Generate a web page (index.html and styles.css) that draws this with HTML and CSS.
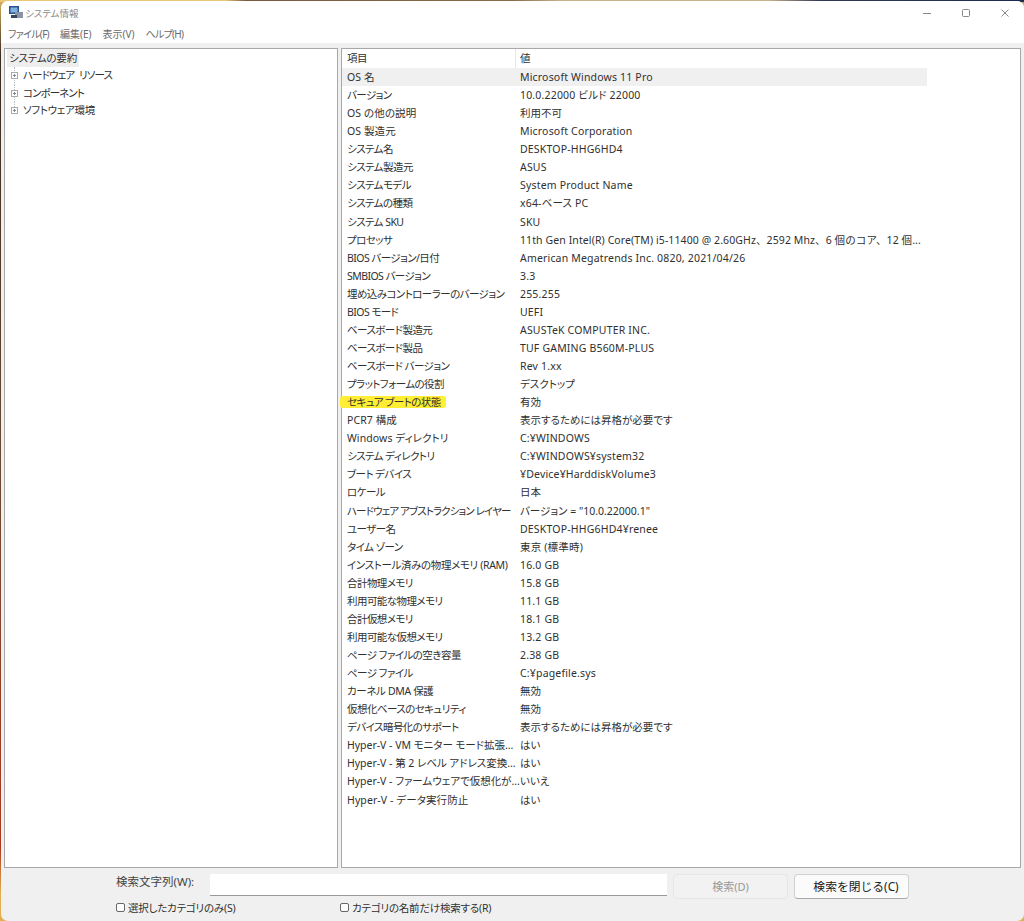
FILE: index.html
```html
<!DOCTYPE html>
<html lang="ja">
<head>
<meta charset="utf-8">
<title>システム情報</title>
<link rel="stylesheet" href="styles.css">
</head>
<body>
<div class="window">
  <header class="titlebar">
    <svg class="appicon" width="14" height="14" viewBox="0 0 14 14"><rect x="0" y="0" width="10" height="8" fill="#2b4f8f"/><rect x="1.5" y="1.5" width="7" height="5" fill="#7fb0e0"/><rect x="6" y="6" width="8" height="6" fill="#8a94a6"/><rect x="2" y="9" width="6" height="3" fill="#3a4660"/></svg>
    <span class="title">システム情報</span>
    <div class="controls">
      <svg width="8" height="12" viewBox="0 0 8 12"><path d="M0 5.5h8" stroke="#888" fill="none"/></svg>
      <svg width="8" height="12" viewBox="0 0 8 12"><rect x=".5" y="1.5" width="7" height="7" rx="1" stroke="#888" fill="none"/></svg>
      <svg width="8" height="12" viewBox="0 0 8 12"><path d="M.5 1.5l7 7M7.5 1.5l-7 7" stroke="#888" fill="none"/></svg>
    </div>
  </header>
  <nav class="menubar">
    <span class="kana">ファイル(F)</span><span>編集(E)</span><span>表示(V)</span><span class="kana">ヘルプ(H)</span>
  </nav>
  <main class="panes">
    <section class="tree">
      <div class="tree-root"><span>システムの要約</span></div>
      <div class="tree-item"><i class="plus"></i><span class="wide-space">ハードウェア リソース</span></div>
      <div class="tree-item"><i class="plus"></i>コンポーネント</div>
      <div class="tree-item tree-last"><i class="plus"></i>ソフトウェア環境</div>
    </section>
    <section class="list">
      <div class="list-head"><div class="c1">項目</div><div class="c2">値</div></div>
      <div class="row shade"><div class="c1 lat">OS 名</div><div class="c2">Microsoft Windows 11 Pro</div></div>
      <div class="row"><div class="c1">バージョン</div><div class="c2">10.0.22000 ビルド 22000</div></div>
      <div class="row"><div class="c1 lat">OS の他の説明</div><div class="c2 jp">利用不可</div></div>
      <div class="row"><div class="c1 lat">OS 製造元</div><div class="c2">Microsoft Corporation</div></div>
      <div class="row"><div class="c1">システム名</div><div class="c2">DESKTOP-HHG6HD4</div></div>
      <div class="row"><div class="c1">システム製造元</div><div class="c2">ASUS</div></div>
      <div class="row"><div class="c1">システムモデル</div><div class="c2">System Product Name</div></div>
      <div class="row"><div class="c1">システムの種類</div><div class="c2">x64-ベース PC</div></div>
      <div class="row"><div class="c1">システム SKU</div><div class="c2">SKU</div></div>
      <div class="row"><div class="c1">プロセッサ</div><div class="c2 full">11th Gen Intel(R) Core(TM) i5-11400 @ 2.60GHz、2592 Mhz、6 個のコア、12 個...</div></div>
      <div class="row"><div class="c1">BIOS バージョン/日付</div><div class="c2">American Megatrends Inc. 0820, 2021/04/26</div></div>
      <div class="row"><div class="c1">SMBIOS バージョン</div><div class="c2">3.3</div></div>
      <div class="row"><div class="c1">埋め込みコントローラーのバージョン</div><div class="c2">255.255</div></div>
      <div class="row"><div class="c1">BIOS モード</div><div class="c2">UEFI</div></div>
      <div class="row"><div class="c1">ベースボード製造元</div><div class="c2">ASUSTeK COMPUTER INC.</div></div>
      <div class="row"><div class="c1">ベースボード製品</div><div class="c2">TUF GAMING B560M-PLUS</div></div>
      <div class="row"><div class="c1">ベースボード バージョン</div><div class="c2">Rev 1.xx</div></div>
      <div class="row"><div class="c1">プラットフォームの役割</div><div class="c2 jp">デスクトップ</div></div>
      <div class="row"><div class="c1"><mark class="marker">セキュア ブートの状態</mark></div><div class="c2 jp">有効</div></div>
      <div class="row"><div class="c1 lat">PCR7 構成</div><div class="c2 jp">表示するためには昇格が必要です</div></div>
      <div class="row"><div class="c1 lat">Windows ディレクトリ</div><div class="c2">C:¥WINDOWS</div></div>
      <div class="row"><div class="c1">システム ディレクトリ</div><div class="c2">C:¥WINDOWS¥system32</div></div>
      <div class="row"><div class="c1">ブート デバイス</div><div class="c2">¥Device¥HarddiskVolume3</div></div>
      <div class="row"><div class="c1">ロケール</div><div class="c2 jp">日本</div></div>
      <div class="row"><div class="c1 tight">ハードウェア アブストラクション レイヤー</div><div class="c2 jp">バージョン = "10.0.22000.1"</div></div>
      <div class="row"><div class="c1">ユーザー名</div><div class="c2">DESKTOP-HHG6HD4¥renee</div></div>
      <div class="row"><div class="c1">タイム ゾーン</div><div class="c2">東京 (標準時)</div></div>
      <div class="row"><div class="c1 loose">インストール済みの物理メモリ (RAM)</div><div class="c2">16.0 GB</div></div>
      <div class="row"><div class="c1">合計物理メモリ</div><div class="c2">15.8 GB</div></div>
      <div class="row"><div class="c1">利用可能な物理メモリ</div><div class="c2">11.1 GB</div></div>
      <div class="row"><div class="c1">合計仮想メモリ</div><div class="c2">18.1 GB</div></div>
      <div class="row"><div class="c1">利用可能な仮想メモリ</div><div class="c2">13.2 GB</div></div>
      <div class="row"><div class="c1">ページ ファイルの空き容量</div><div class="c2">2.38 GB</div></div>
      <div class="row"><div class="c1">ページ ファイル</div><div class="c2">C:¥pagefile.sys</div></div>
      <div class="row"><div class="c1 loose">カーネル DMA 保護</div><div class="c2 jp">無効</div></div>
      <div class="row"><div class="c1">仮想化ベースのセキュリティ</div><div class="c2 jp">無効</div></div>
      <div class="row"><div class="c1">デバイス暗号化のサポート</div><div class="c2 jp">表示するためには昇格が必要です</div></div>
      <div class="row"><div class="c1 hv">Hyper-V - VM モニター モード拡張...</div><div class="c2 jp">はい</div></div>
      <div class="row"><div class="c1 hv">Hyper-V - 第 2 レベル アドレス変換...</div><div class="c2 jp">はい</div></div>
      <div class="row"><div class="c1 hv">Hyper-V - ファームウェアで仮想化が...</div><div class="c2 jp">いいえ</div></div>
      <div class="row"><div class="c1 lat">Hyper-V - データ実行防止</div><div class="c2 jp">はい</div></div>
    </section>
  </main>
  <footer class="search">
    <div class="search-row">
      <label class="search-label">検索文字列(W):</label>
      <div class="search-input"></div>
      <button class="btn disabled">検索(D)</button>
      <button class="btn btn-close">検索を閉じる(C)</button>
    </div>
    <div class="check-row">
      <span class="check c-a"><i class="box"></i>選択したカテゴリのみ(S)</span>
      <span class="check"><i class="box"></i>カテゴリの名前だけ検索する(R)</span>
    </div>
  </footer>
</div>
</body>
</html>
```
FILE: styles.css
```css
* { box-sizing: border-box; }
html, body { margin: 0; height: 100%; }
body {
  background:
    linear-gradient(90deg, #e8c878 0, #e8c878 22%, #7a5a40 24%, #8a6a48 50%, #c9b48a 55%, #c9b48a 75%, #2f3a55 80%, #1c2a50 100%) top / 100% 2px no-repeat,
    linear-gradient(180deg, #d8b060 0, #3a2c20 6%, #6a4a30 50%, #b03a20 92%, #e0b050 97%);
  font-family: "Noto Sans", "Noto Sans CJK JP", sans-serif;
  font-size: 10.5px;
  font-feature-settings: "palt";
  color: #303030;
  overflow: hidden;
}
.window { height: 920px; margin: 1px 0 0 1px; background: #f0f0f0; display: flex; flex-direction: column; border-radius: 7px; overflow: hidden; }
.titlebar { height: 25px; background: #fff; display: flex; align-items: center; padding-left: 8px; flex: none; }
.appicon { margin-top: -1px; }
.title { color: #8a8a8a; margin: -2px 0 0 2px; font-size: 9.5px; }
.controls { margin-left: auto; display: flex; gap: 31px; padding-right: 15px; }
.menubar { height: 17px; background: #fff; display: flex; gap: 11px; padding: 0 0 2px 7px; color: #6a6a6a; align-items: center; flex: none; font-size: 10px; }
.kana { letter-spacing: -.7px; }
.panes { display: flex; gap: 3px; padding: 5px 0 0 3px; height: 825px; flex: none; }
.tree { width: 334px; flex: none; background: #fff; border: 1px solid #a8a8a8; padding: 0 0 0 2px; letter-spacing: -.9px; }
.tree-root { height: 18px; line-height: 18px; letter-spacing: -.2px; }
.tree-root span { background: #eeeeee; padding: 0 2px; display: inline-block; }
.tree-item { height: 17.5px; line-height: 17.5px; display: flex; align-items: center; padding-left: 4px; position: relative; }
.tree-item::before { content: ""; position: absolute; left: 7px; top: 0; bottom: 0; border-left: 1px dotted #bbb; }
.wide-space { word-spacing: 3px; }
.tree-last { letter-spacing: -.3px; }
.tree-last::before { bottom: 50%; }
.plus { width: 7px; height: 7px; border: 1px solid #aaa; background: linear-gradient(#888, #888) center / 3px 1px no-repeat, linear-gradient(#888, #888) center / 1px 3px no-repeat, #fff; margin-right: 5px; position: relative; flex: none; z-index: 1; }
.list { width: 680px; flex: none; background: #fff; border: 1px solid #a8a8a8; padding: 0; }
.list-head, .row { display: flex; width: 585px; height: 18.075px; line-height: 18px; }
.list-head { height: 19px; }
.c1 { width: 173px; padding-left: 5px; flex: none; white-space: nowrap; letter-spacing: -.55px; }
.c1.lat { letter-spacing: .1px; }
.c1.hv { letter-spacing: -.02px; }
.c1.tight { letter-spacing: -.9px; }
.c1.loose { letter-spacing: -.35px; }
.list-head .c2 { border-left: 1px solid #e6e6e6; padding-left: 4px; }
.c2 { padding-left: 5px; white-space: nowrap; letter-spacing: .18px; }
.c2.jp { letter-spacing: 0; }
.c2.full { font-feature-settings: normal; letter-spacing: .1px; }
.shade { background: #f0f0f0; }
.marker { background: #ffee33; color: inherit; padding: 0 5px 0 7px; margin-left: -7px; border-radius: 3px; display: inline-block; height: 12px; line-height: 12px; }
.search { flex: 1; padding-left: 115px; }
.search-row { display: flex; align-items: flex-start; padding-top: 6px; }
.search-label { width: 94px; color: #444; line-height: 16px; font-feature-settings: normal; font-size: 11.5px; }
.search-input { width: 457px; height: 22px; background: #fff; border-bottom: 1px solid #999; }
.btn { height: 25px; width: 115px; margin-left: 6px; padding: 0 0 2px; background: #fbfbfb; border: 1px solid #d0d0d0; border-bottom-color: #aaa; border-radius: 4px; font: inherit; font-feature-settings: normal; font-size: 11px; color: #222; }
.btn-close { font-size: 11.8px; padding-left: 9px; }
.btn.disabled { background: #f2f2f2; border-color: #e6e6e6; color: #999; }
.check-row { display: flex; margin-top: 1px; }
.check { display: inline-flex; align-items: center; letter-spacing: -.2px; }
.c-a { width: 224px; }
.box { width: 9px; height: 9px; border: 1px solid #666; border-radius: 2px; margin-right: 3px; background: #fff; flex: none; }
```
